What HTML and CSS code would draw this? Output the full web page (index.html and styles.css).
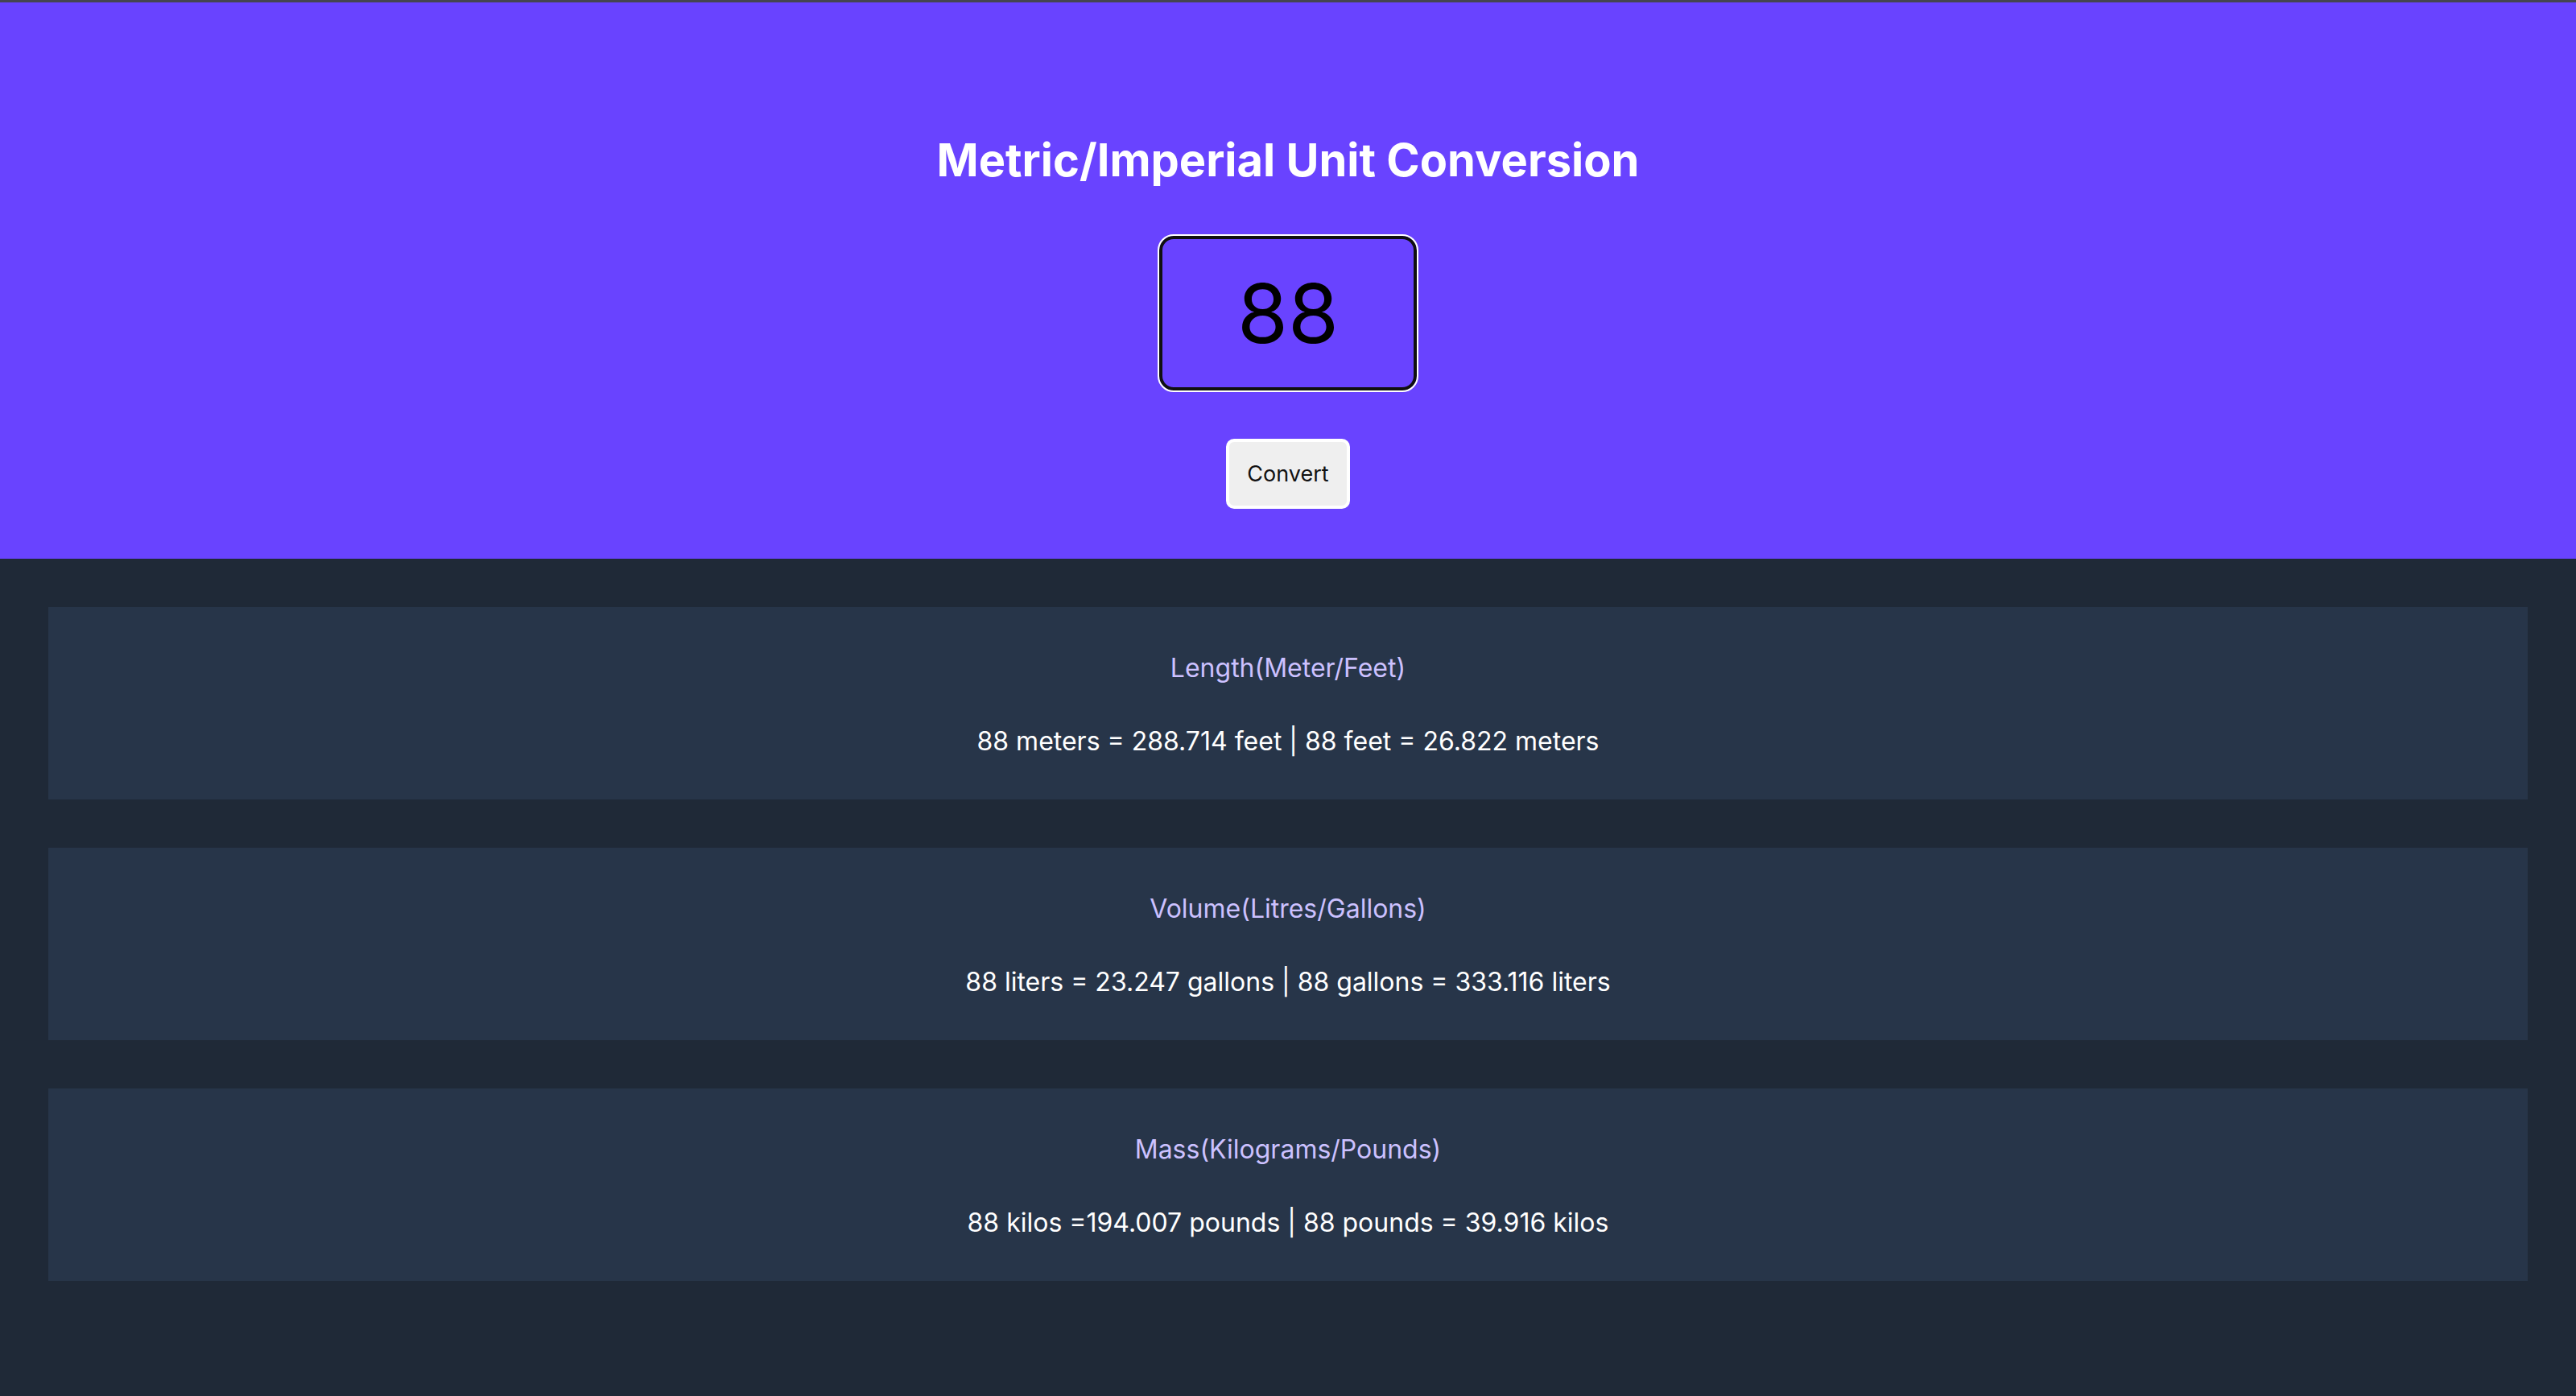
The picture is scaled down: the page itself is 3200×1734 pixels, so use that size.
FILE: index.html
```html
<!DOCTYPE html>
<html lang="en">
<head>
<meta charset="utf-8">
<title>Unit Conversion</title>
<link rel="stylesheet" href="styles.css">
</head>
<body>
<header class="hero">
  <h1 class="hero-title">Metric/Imperial Unit Conversion</h1>
  <input class="hero-input" type="text" value="88">
  <button class="hero-btn" type="button">Convert</button>
</header>
<main class="results">
  <section class="card">
    <h2 class="card-title">Length(Meter/Feet)</h2>
    <p class="card-text">88 meters = 288.714 feet | 88 feet = 26.822 meters</p>
  </section>
  <section class="card">
    <h2 class="card-title">Volume(Litres/Gallons)</h2>
    <p class="card-text">88 liters = 23.247 gallons | 88 gallons = 333.116 liters</p>
  </section>
  <section class="card">
    <h2 class="card-title">Mass(Kilograms/Pounds)</h2>
    <p class="card-text">88 kilos =194.007 pounds | 88 pounds = 39.916 kilos</p>
  </section>
</main>
</body>
</html>
```
FILE: styles.css
```css
html, body {
  margin: 0;
  padding: 0;
}
body {
  background: #1f2937;
  font-family: Inter, "Noto Sans", sans-serif;
  border-top: 3px solid #45454f;
  min-height: 1731px;
}
.hero {
  background: #6943ff;
  display: flex;
  flex-direction: column;
  align-items: center;
  padding: 168px 0 62px;
}
.hero-title {
  margin: 0;
  font-size: 56px;
  line-height: 56px;
  font-weight: 700;
  color: #ffffff;
}
.hero-input {
  box-sizing: border-box;
  margin-top: 66px;
  width: 320px;
  height: 192px;
  border: 4px solid #101010;
  outline: 2px solid #ffffff;
  border-radius: 18px;
  background: #6943ff;
  color: #000000;
  font-family: Inter, "Noto Sans", sans-serif;
  font-size: 102px;
  text-align: center;
  padding: 0;
}
.hero-btn {
  box-sizing: border-box;
  margin-top: 60px;
  width: 154px;
  height: 87px;
  background: #efefef;
  border: 4px solid #ffffff;
  border-radius: 10px;
  color: #111111;
  font-family: Inter, "Noto Sans", sans-serif;
  font-size: 27px;
  padding: 0;
}
.results {
  display: flex;
  flex-direction: column;
  gap: 60px;
  padding: 60px 60px;
}
.card {
  background: #273549;
  height: 239px;
  box-sizing: border-box;
  padding-top: 57px;
  display: flex;
  flex-direction: column;
  align-items: center;
}
.card-title {
  margin: 0;
  font-size: 32px;
  font-weight: 400;
  line-height: 38px;
  color: #ccc1ff;
}
.card-text {
  margin: 53px 0 0;
  font-size: 32px;
  line-height: 38px;
  color: #ffffff;
}
```
